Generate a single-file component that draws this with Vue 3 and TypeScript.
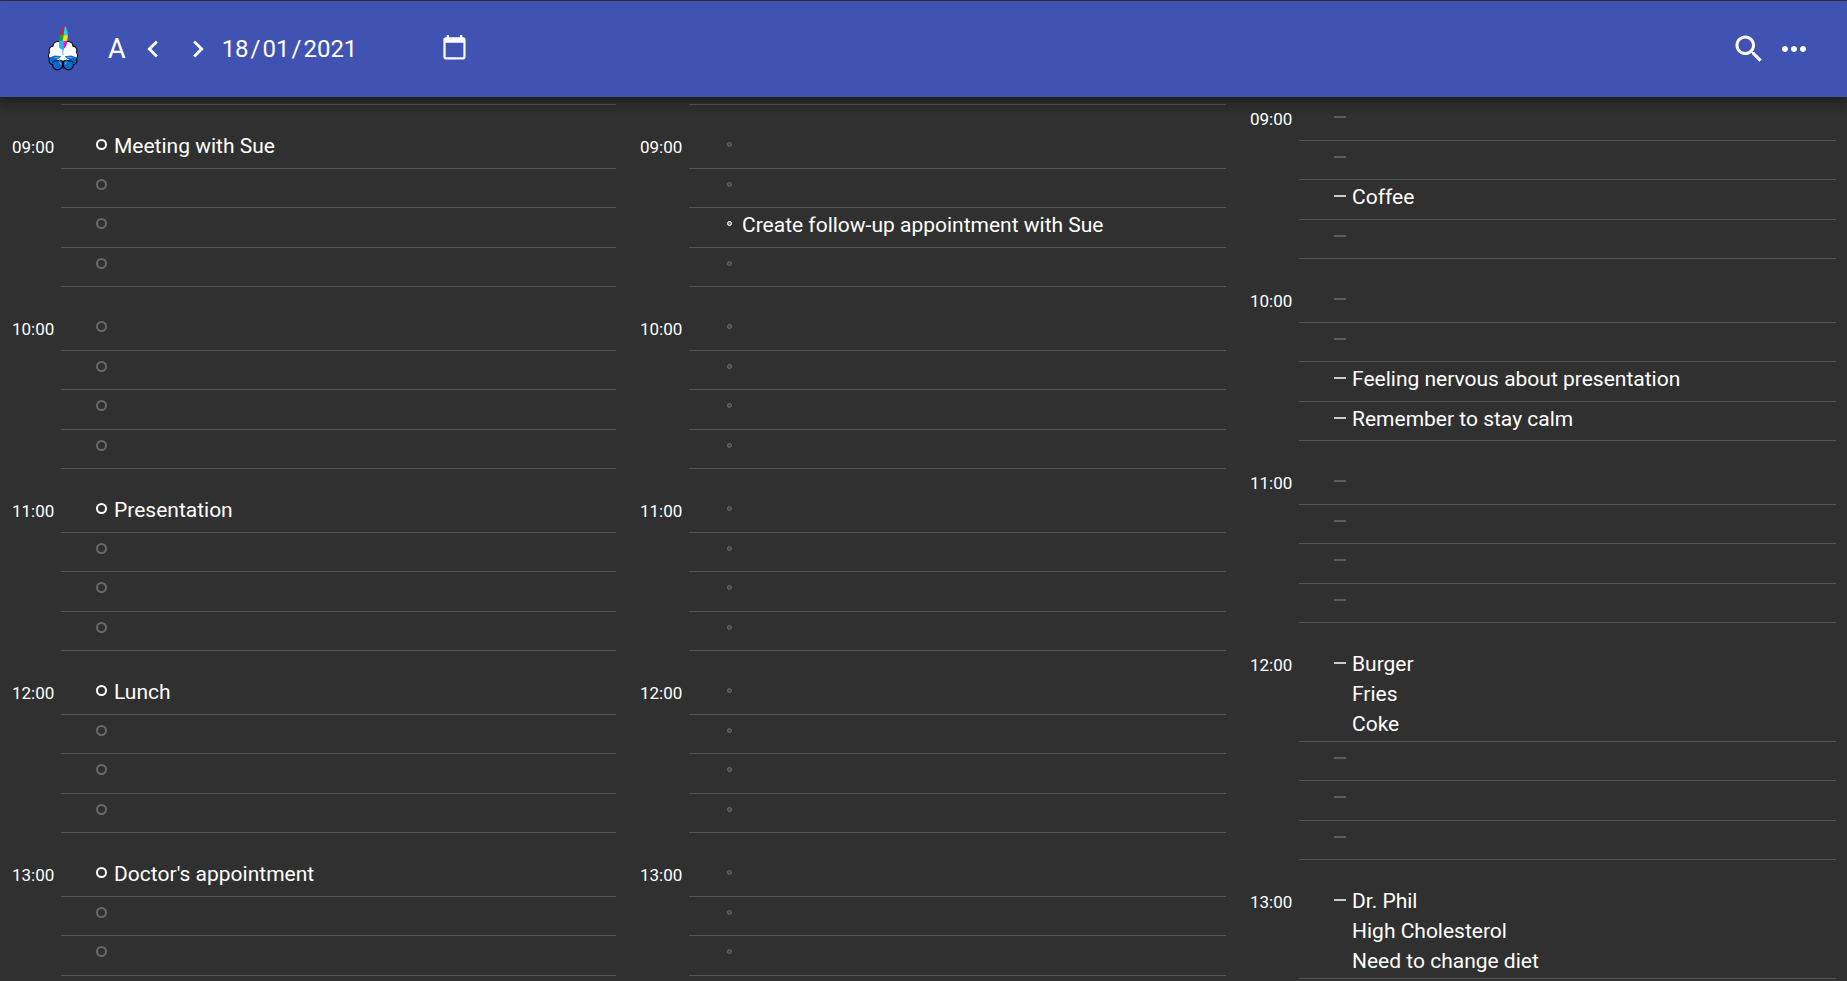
<script setup lang="ts">
import { onMounted, ref } from 'vue'

type Kind = 'event' | 'task' | 'note'

interface Column {
  kind: Kind
  title: string
  scroll: number
  entries: Record<string, string>
}

const dayStart = 9
const hours: number[] = [8, 9, 10, 11, 12, 13]
const quarters: number[] = [0, 1, 2, 3]

const columns: Column[] = [
  {
    kind: 'event',
    title: 'Events',
    scroll: 174,
    entries: {
      '9-0': 'Meeting with Sue',
      '11-0': 'Presentation',
      '12-0': 'Lunch',
      '13-0': "Doctor's appointment",
    },
  },
  {
    kind: 'task',
    title: 'Tasks',
    scroll: 174,
    entries: { '9-2': 'Create follow-up appointment with Sue' },
  },
  {
    kind: 'note',
    title: 'Notes',
    scroll: 202,
    entries: {
      '9-2': 'Coffee',
      '10-2': 'Feeling nervous about presentation',
      '10-3': 'Remember to stay calm',
      '12-0': 'Burger\nFries\nCoke',
      '13-0': 'Dr. Phil\nHigh Cholesterol\nNeed to change diet',
    },
  },
]

const panes = ref<HTMLElement[]>([])

function label(hour: number): string {
  return hour < dayStart ? '' : `${String(hour).padStart(2, '0')}:00`
}

onMounted(() => {
  panes.value.forEach((pane, i) => {
    pane.scrollTop = columns[i].scroll
  })
})
</script>

<template>
  <div class="app">
    <header class="bar">
      <a class="logo" href="#" aria-label="Home">
        <svg viewBox="0 0 32 48" width="32" height="48">
          <g v-for="side in ['', 'translate(32 0) scale(-1 1)']" :key="side" :transform="side">
            <g fill="#05050c">
              <circle cx="11" cy="21.500" r="5.600" />
              <circle cx="6.500" cy="25.500" r="4.900" />
              <circle cx="5.500" cy="31" r="4.600" />
              <circle cx="6.500" cy="35.500" r="4.900" />
              <circle cx="10.500" cy="40" r="5.400" />
              <path d="M9 22h7v20H9z" />
            </g>
            <g fill="#fff">
              <circle cx="11" cy="21.500" r="4.500" />
              <circle cx="6.500" cy="25.500" r="3.800" />
              <circle cx="5.500" cy="30.500" r="3.500" />
              <path d="M6 23h10v12.500H6z" />
            </g>
            <g fill="#0f68cc">
              <circle cx="6.500" cy="35.500" r="3.800" />
              <circle cx="10.500" cy="40" r="4.300" />
              <path d="M10 36h4.800v5.500H10z" />
              <path d="M2.500 32.500 8 30.500l6.500.8-3.500 3-8 1z" />
            </g>
            <path fill="#4aa2f2" d="m5.500 32.500 5-.8 2.500.3-3.500 1.600zM11.500 37l2.800.3v3z" />
            <path fill="#fff" d="m14.200 31.500 2-1V35l-4-.2z" />
            <path fill="none" stroke="#05050c" stroke-width=".9" d="M5.500 38c.6-1.800 2.500-2.300 4.500-2l2.500-1 2.500 1" />
          </g>
          <path fill="#05050c" d="M15.500 36h1v8h-1z" />
          <path fill="#f01420" d="M18 .8c-2.600 2.600-4.600 5.700-5 9.700l4-.8z" />
          <path fill="#18d8f0" d="M18 .8c2 2.700 2.800 6 2.700 9.200L16.300 11z" />
          <path fill="#16a334" d="M13 10.300 16.800 9.500 16 16h-4z" />
          <path fill="#f4e020" d="m16.600 10.600 4.100-.9c.2 2.800-.2 4.800-.7 6.300l-4.500 1z" />
          <path fill="#20b8f0" d="M12 15.800h4.200l.2 10-4.200-3z" />
          <path fill="#f010d8" d="m16 16.800 4-1c.4 3.500-.8 6.300-3.900 8.800z" />
          <path fill="none" stroke="#48b4f0" stroke-width="1" d="m16.200 17-.4 13" />
        </svg>
      </a>
      <button class="letter" type="button" aria-label="Text mode">A</button>
      <button class="icon" type="button" aria-label="Previous day">
        <svg viewBox="0 0 24 24" width="34" height="34"><path fill="#fff" d="M15.410 7.410 14 6l-6 6 6 6 1.410-1.410L10.830 12z" /></svg>
      </button>
      <button class="icon next" type="button" aria-label="Next day">
        <svg viewBox="0 0 24 24" width="34" height="34"><path fill="#fff" d="M10 6 8.590 7.410 13.170 12l-4.580 4.590L10 18l6-6z" /></svg>
      </button>
      <time class="date" datetime="2021-01-18"><span>18</span><i>/</i><span>01</span><i>/</i><span>2021</span></time>
      <button class="icon" type="button" aria-label="Pick a date">
        <svg viewBox="0 0 24 28" width="27" height="31"><path fill="#fff" d="M20 3h-1V1h-2v2H7V1H5v2H4c-1.100 0-2 .9-2 2v16c0 1.100.9 2 2 2h16c1.100 0 2-.9 2-2V5c0-1.100-.9-2-2-2zm0 18H4V8h16v13z" /></svg>
      </button>
      <span class="spacer"></span>
      <button class="icon" type="button" aria-label="Search">
        <svg viewBox="0 0 24 24" width="36" height="36"><path fill="#fff" d="M15.500 14h-.79l-.28-.27C15.410 12.590 16 11.110 16 9.500 16 5.910 13.090 3 9.500 3S3 5.910 3 9.500 5.910 16 9.500 16c1.610 0 3.090-.59 4.230-1.570l.27.28v.79l5 4.990L20.490 19l-4.990-5zm-6 0C7.010 14 5 11.990 5 9.500S7.010 5 9.500 5 14 7.010 14 9.500 11.990 14 9.500 14z" /></svg>
      </button>
      <button class="icon more" type="button" aria-label="More options">
        <svg viewBox="0 0 24 24" width="36" height="36"><path fill="#fff" d="M6 10c-1.100 0-2 .9-2 2s.9 2 2 2 2-.9 2-2-.9-2-2-2zm12 0c-1.100 0-2 .9-2 2s.9 2 2 2 2-.9 2-2-.9-2-2-2zm-6 0c-1.100 0-2 .9-2 2s.9 2 2 2 2-.9 2-2-.9-2-2-2z" /></svg>
      </button>
    </header>

    <main class="board">
      <section v-for="col in columns" :key="col.kind" ref="panes" class="pane" :aria-label="col.title">
        <div v-for="hour in hours" :key="hour" class="hour">
          <div class="time">{{ label(hour) }}</div>
          <ul class="slots">
            <li v-for="q in quarters" :key="q" class="slot" :class="{ filled: col.entries[`${hour}-${q}`] }">
              <span class="marker"><span :class="col.kind"></span></span>
              <span class="text">{{ col.entries[`${hour}-${q}`] }}</span>
            </li>
          </ul>
        </div>
      </section>
    </main>
  </div>
</template>

<style>
body {
  margin: 0;
  background: #303030;
}
</style>

<style scoped>
.app {
  box-sizing: border-box;
  height: 100vh;
  padding-top: 1px;
  display: flex;
  flex-direction: column;
  background: #303030;
  color: #fff;
  font-family: Roboto, "Liberation Sans", sans-serif;
}

.bar {
  position: relative;
  z-index: 1;
  flex: none;
  box-sizing: border-box;
  height: 96px;
  padding: 0 35px 0 47px;
  display: flex;
  align-items: center;
  background: #4053b3;
  box-shadow: 0 5px 5px -3px rgba(0, 0, 0, 0.2), 0 8px 10px 1px rgba(0, 0, 0, 0.14), 0 3px 14px 2px rgba(0, 0, 0, 0.12);
}

button {
  padding: 0;
  border: 0;
  background: none;
  color: inherit;
  font-family: inherit;
  cursor: pointer;
}

svg {
  display: block;
}

.letter {
  margin: 0 10px 0 29px;
  font-size: 27px;
  line-height: 32px;
}

.next {
  margin: 0 7px 0 11px;
}

.date {
  display: flex;
  gap: 2px;
  width: 219px;
  font-size: 24px;
  line-height: 32px;
}

.date i {
  font-style: normal;
}

.spacer {
  flex: 1;
}

.more {
  margin-left: 9px;
}

.board {
  flex: 1;
  min-height: 0;
  padding: 0 11px 0 12px;
  display: grid;
  grid-template-columns: 604fr 586fr 586fr;
  grid-template-rows: minmax(0, 1fr);
  gap: 24px;
}

.pane {
  min-width: 0;
  overflow-y: auto;
  scrollbar-width: none;
}

.hour {
  display: flex;
}

.time {
  width: 49px;
  flex: none;
  padding-top: 30px;
  font-size: 17px;
  line-height: 24px;
}

.slots {
  flex: 1;
  min-width: 0;
  margin: 0;
  padding: 0;
  list-style: none;
}

.slot {
  box-sizing: border-box;
  min-height: 39px;
  padding: 2px 0 2px 29px;
  display: flex;
  gap: 1px;
  border-bottom: 1px solid #555;
}

.slot:first-child {
  min-height: 64px;
  padding-top: 26px;
}

.slot:nth-child(3) {
  min-height: 40px;
}

.marker {
  flex: none;
  width: 23px;
  height: 27px;
  display: flex;
  align-items: center;
  justify-content: center;
  opacity: 0.28;
}

.filled .marker {
  opacity: 1;
}

.event {
  box-sizing: border-box;
  width: 11px;
  height: 11px;
  border: 2px solid #fff;
  border-radius: 50%;
}

.task {
  box-sizing: border-box;
  width: 5px;
  height: 5px;
  border: 1px solid #fff;
  border-radius: 50%;
  background: rgba(255, 255, 255, 0.4);
}

.note {
  width: 12px;
  height: 2px;
  background: #ccc;
}

.text {
  font-size: 21px;
  line-height: 30px;
  white-space: pre-line;
}
</style>
